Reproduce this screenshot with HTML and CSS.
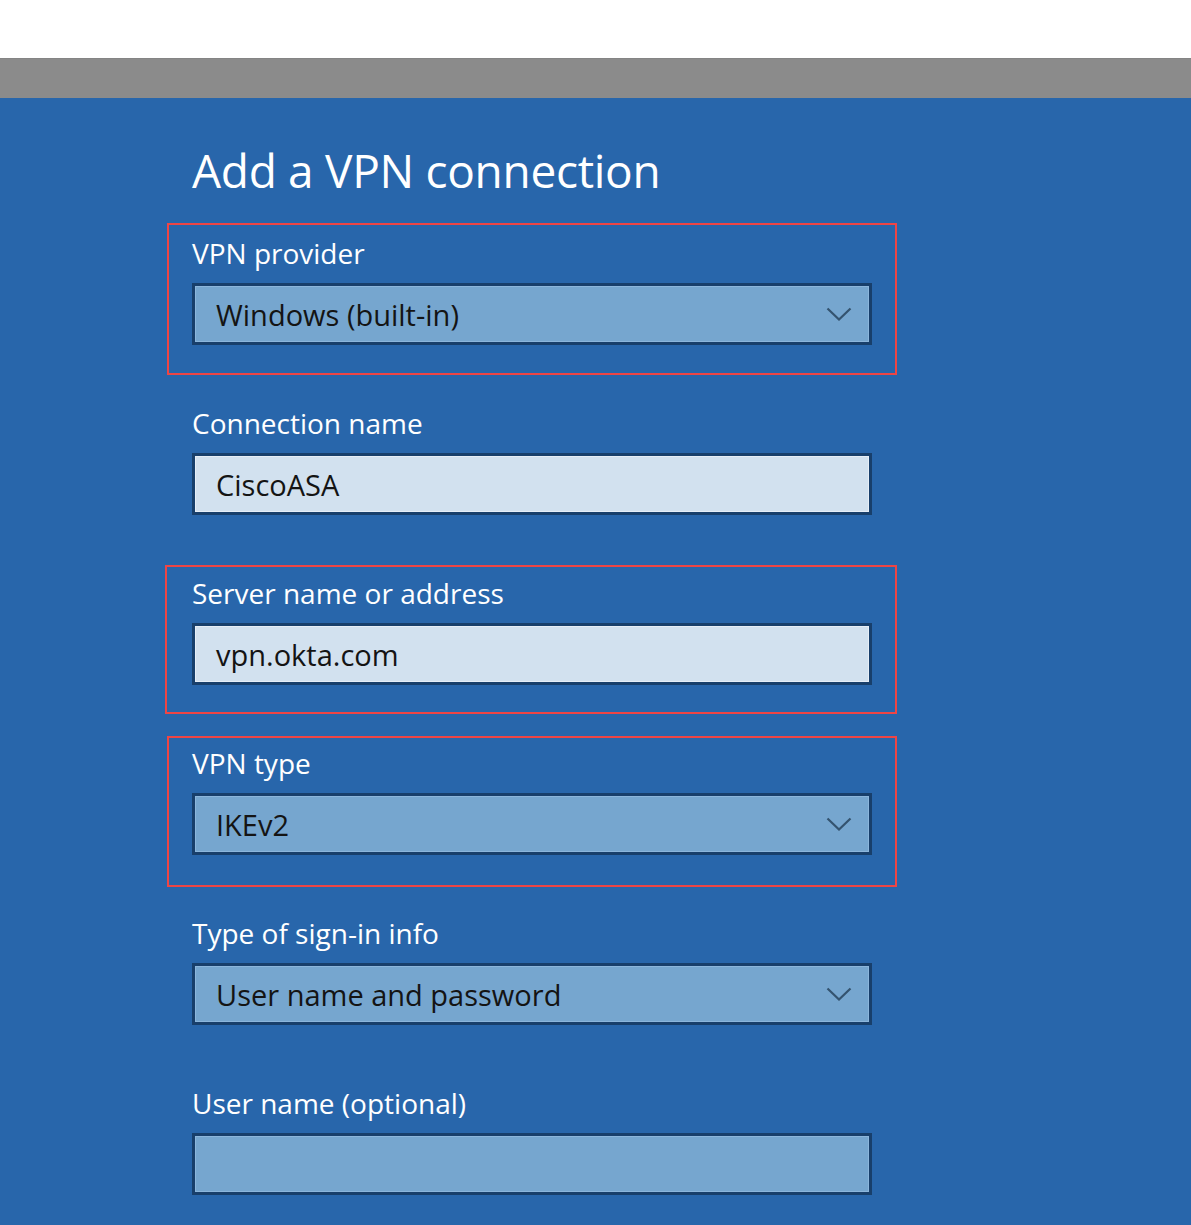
FILE: index.html
```html
<!DOCTYPE html>
<html lang="en">
<head>
<meta charset="utf-8">
<title>Add a VPN connection</title>
<link rel="stylesheet" href="styles.css">
</head>
<body>
<div class="topgap"></div>
<div class="titlebar"></div>
<main class="panel">
  <h1 class="title">Add a VPN connection</h1>
  <div class="form">
    <div class="group hl hl-a">
      <div class="label">VPN provider</div>
      <div class="field select">
        <span class="value">Windows (built-in)</span>
        <svg class="chev" width="26" height="14" viewBox="0 0 26 14"><polyline points="1.5,1.5 13,12.5 24.5,1.5" fill="none" stroke="#34536f" stroke-width="2.2"/></svg>
      </div>
    </div>
    <div class="group">
      <div class="label">Connection name</div>
      <div class="field text"><span class="value">CiscoASA</span></div>
    </div>
    <div class="group hl hl-b">
      <div class="label">Server name or address</div>
      <div class="field text"><span class="value">vpn.okta.com</span></div>
    </div>
    <div class="group hl hl-c">
      <div class="label">VPN type</div>
      <div class="field select">
        <span class="value">IKEv2</span>
        <svg class="chev" width="26" height="14" viewBox="0 0 26 14"><polyline points="1.5,1.5 13,12.5 24.5,1.5" fill="none" stroke="#34536f" stroke-width="2.2"/></svg>
      </div>
    </div>
    <div class="group">
      <div class="label">Type of sign-in info</div>
      <div class="field select">
        <span class="value">User name and password</span>
        <svg class="chev" width="26" height="14" viewBox="0 0 26 14"><polyline points="1.5,1.5 13,12.5 24.5,1.5" fill="none" stroke="#34536f" stroke-width="2.2"/></svg>
      </div>
    </div>
    <div class="group">
      <div class="label">User name (optional)</div>
      <div class="field select empty"></div>
    </div>
  </div>
</main>
</body>
</html>
```
FILE: styles.css
```css
html, body {
  margin: 0;
  padding: 0;
  height: 100%;
  overflow: hidden;
}
body {
  background: #ffffff;
  font-family: "Open Sans", "Noto Sans", sans-serif;
  display: flex;
  flex-direction: column;
}
.topgap {
  height: 58px;
  background: #ffffff;
  flex: none;
}
.titlebar {
  height: 40px;
  flex: none;
  background: #8b8b8b;
  border-top: 1px solid #848484;
  box-sizing: border-box;
}
.panel {
  flex: 1;
  background: #2866ab;
  padding: 0 0 0 167px;
}
.title {
  margin: 0;
  padding: 42px 0 0 25px;
  height: 125px;
  box-sizing: border-box;
  font-weight: 400;
  font-size: 46px;
  line-height: 60px;
  color: #ffffff;
  letter-spacing: -0.3px;
}
.form {
  display: flex;
  flex-direction: column;
}
.group {
  position: relative;
  height: 170px;
  width: 730px;
  box-sizing: border-box;
  padding: 10px 0 0 25px;
}
.hl::after {
  content: "";
  position: absolute;
  border: 2px solid #ef4545;
  box-sizing: border-box;
  pointer-events: none;
}
.hl-a::after { top: 0; left: 0; width: 730px; height: 152px; }
.hl-b::after { top: 2px; left: -2px; width: 732px; height: 149px; }
.hl-c::after { top: 3px; left: 0; width: 730px; height: 151px; }
.label {
  height: 50px;
  font-size: 28px;
  line-height: 40px;
  color: #ffffff;
}
.field {
  width: 680px;
  height: 62px;
  box-sizing: border-box;
  border: 3px solid #183f6b;
  display: flex;
  align-items: center;
  padding: 0 17px 0 21px;
  font-size: 29px;
  color: #141414;
}
.select {
  background: #76a6cf;
  box-shadow: inset 0 0 0 1px #8cb6dc;
}
.text {
  background: #d2e1ef;
  box-shadow: inset 0 0 0 1px #e6eef7;
}
.value {
  flex: 1;
}
.chev {
  flex: none;
  display: block;
}
```
